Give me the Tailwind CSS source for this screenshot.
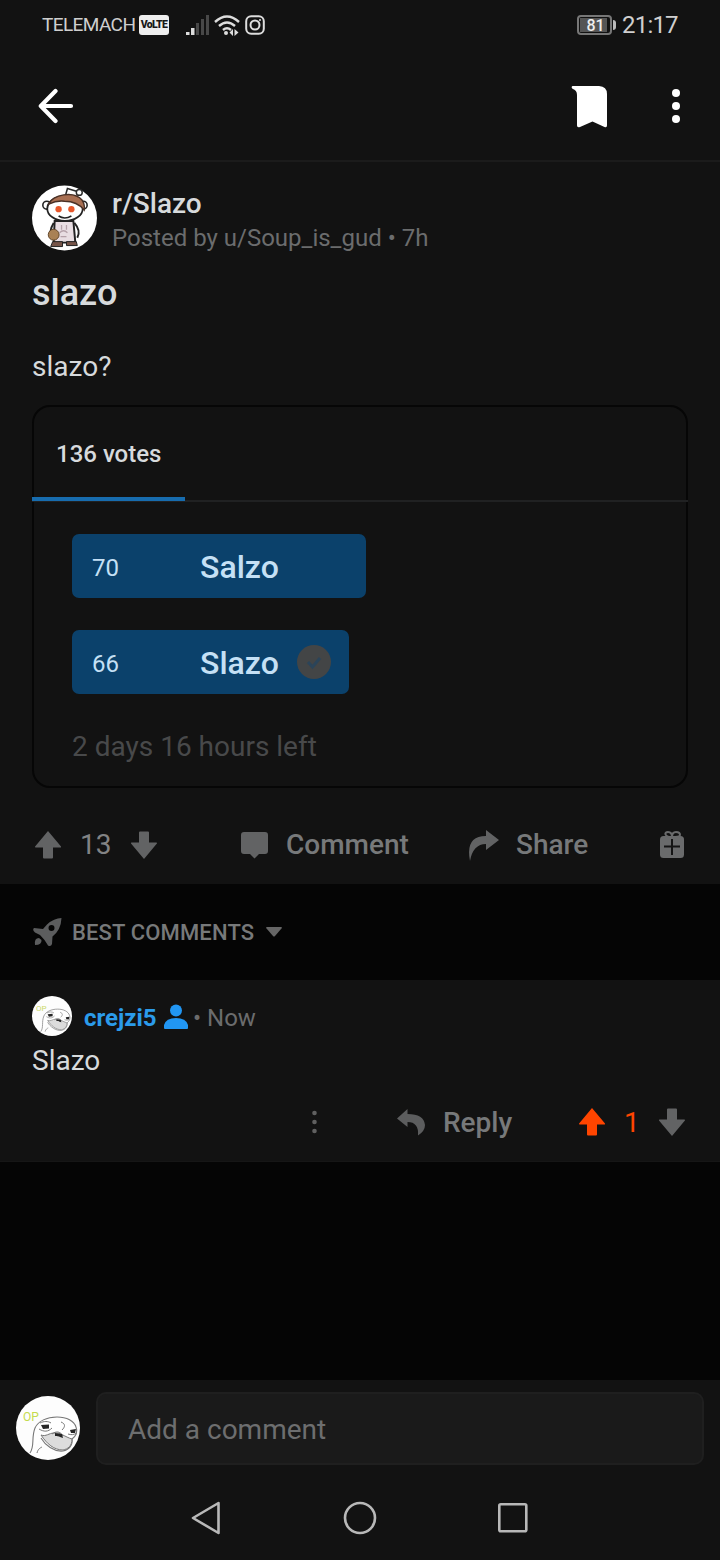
<!DOCTYPE html>
<html lang="en">
<head>
<meta charset="utf-8">
<title>r/Slazo</title>
<script src="https://cdn.jsdelivr.net/npm/@tailwindcss/browser@4"></script>
</head>
<body class="bg-[#121212]">
<svg class="hidden">
  <defs>
    <symbol id="up" viewBox="0 0 26 28"><path d="M13 0 26 15.500a.7.7 0 0 1-.6 1H18V26.500a1 1 0 0 1-1 1H9a1 1 0 0 1-1-1V16.500H.6a.7.7 0 0 1-.5-1Z" fill="currentColor"/></symbol>
    <symbol id="face" viewBox="0 0 64 64">
      <circle cx="32" cy="32" r="32" fill="#fdfdfd"/>
      <path d="M14 57C19 50 15 42 19 32c3-7 12-11 22-11 10 0 17 4 19 10 2 5 0 9-4 12 1 6-3 11-9 12-9 1-18-6-22-13" fill="#fff" stroke="#777" stroke-width="1.100"/>
      <path d="M25 39c5 2 8-2 13-2 6-1 11 4 18 6 0 7-4 10-9 11-9 0-16-6-22-15Z" fill="#dcdcdc" stroke="#777" stroke-width="1"/>
      <path d="M23 33c5 3 9 3 13-1M52 38c3 1 6 1 8-1M36 38c4-3 8-3 11 2M24 27c4-2 8-2 11 0M45 26c5 2 4 5 1 8M21 57c1-4 3-5 5-6" fill="none" stroke="#777"/>
      <path d="m25 29 8-.5v4l-6 .5ZM54 34l6-1-1 4h-4ZM39 37l7 1 1 4-3-1c-1-1-3-1-5-1Z" fill="#252525"/>
    </symbol>
  </defs>
</svg>
<main class="w-[720px] h-[1560px] flex flex-col overflow-hidden bg-[#121212] font-[Roboto,sans-serif] text-[#d7dadc] whitespace-nowrap">
  <!-- Status bar -->
  <header class="h-[50px] shrink-0 flex items-center pl-[42px] pr-[42px] text-[#cfcfcf]">
    <span class="text-[19px] leading-[50px] w-[96px] tracking-[-0.6px]">TELEMACH</span>
    <span class="w-[30px] h-[20px] ml-px rounded-[3px] bg-[#eee] text-[#181818] text-[10.5px] leading-[20px] font-black text-center tracking-[-0.6px]">VoLTE</span>
    <svg class="ml-[17px]" width="24" height="22" viewBox="0 0 24 22"><path d="M0 18h3.500v3H0zM5 14h3.500v7H5z" fill="#ddd"/><path d="M10 9h3v12h-3zM15 5h3v16h-3zM20 1h3v20h-3z" fill="#484848"/></svg>
    <svg class="ml-[4px]" width="27" height="22" viewBox="0 0 27 22"><g fill="none" stroke="#ddd" stroke-width="2.400"><path d="M1 8Q13 -3 25 8M5 12Q13 5 21 12M9 16Q13 12.500 17 16"/></g><circle cx="12" cy="19" r="2" fill="#ddd"/><path d="m15.500 18.500 3.500-3.500v7ZM24.500 18.500 20.500 15v7Z" fill="#ddd"/></svg>
    <svg class="ml-[4px]" width="20" height="20" viewBox="0 0 20 20" fill="none" stroke="#ddd" stroke-width="2"><rect x="1.200" y="1.200" width="17.600" height="17.600" rx="5"/><circle cx="10" cy="10" r="4.500"/><circle cx="15" cy="5" r="1" fill="#ddd" stroke="none"/></svg>
    <span class="ml-auto w-[35px] h-[20px] rounded-[4px] border-2 border-[#777] p-px"><span class="block w-[27px] h-[14px] bg-[#555] text-[16px] leading-[15px] font-medium text-[#eee] text-center pl-[4px]">81</span></span>
    <span class="w-[3px] h-[10px] ml-px rounded-r-sm bg-[#bbb]"></span>
    <span class="text-[24px] leading-[51px] w-[56px] ml-[6px] tracking-[-0.8px]">21:17</span>
  </header>
  <!-- App bar -->
  <nav class="h-[112px] shrink-0 flex items-center pt-[2px] pl-[38px] pr-[39px] border-b-2 border-[#1b1b1b] text-white">
    <svg width="36" height="36" viewBox="0 0 36 36" fill="none" stroke="currentColor" stroke-width="4.200" stroke-linecap="round" stroke-linejoin="round"><path d="M33 18H3M17.500 3 2.800 18l14.700 15"/></svg>
    <svg class="ml-auto mt-[2px]" width="38" height="42" viewBox="0 0 38 42" fill="currentColor"><path d="M2.500 0H29Q37 .5 37 8V39.500Q37 42 34.500 41L22.500 35.500 10 41Q7 42 7 39.500V9Q7 4 2.500 2.700Q.8 1 2.500 0Z"/></svg>
    <svg class="ml-[63px]" width="10" height="36" viewBox="0 0 10 36" fill="currentColor"><circle cx="5" cy="5" r="4"/><circle cx="5" cy="18" r="4"/><circle cx="5" cy="31" r="4"/></svg>
  </nav>
  <!-- Post -->
  <article class="h-[722px] shrink-0 px-8 flex flex-col">
    <div class="flex shrink-0 pt-[23px] h-[99px]">
      <svg width="65" height="66" viewBox="0 0 66 66">
        <circle cx="33" cy="33" r="33" fill="#fff"/>
        <path d="m34 10 2-7 10 3" fill="none" stroke="#2a2a2a" stroke-width="1.600"/><circle cx="48" cy="7" r="3" fill="#fff" stroke="#2a2a2a" stroke-width="1.500"/>
        <circle cx="15" cy="20" r="4" fill="#fff" stroke="#222" stroke-width="1.600"/><circle cx="52" cy="20" r="4" fill="#fff" stroke="#222" stroke-width="1.600"/>
        <path d="M22 38q-5 8-2 15M43 38q7 8 3 15" fill="#fff" stroke="#222" stroke-width="2"/>
        <path d="M23 36H42L44 58H22Z" fill="#e8dde2" stroke="#222" stroke-width="2"/>
        <path d="M30 40v5m5-5v5m-7 3q4-4 8 0m-7 4h6" fill="none" stroke="#b5a1a9" stroke-width="1.300"/>
        <path d="M21 57h10v5h-12ZM35 57h10l1 4H35Z" fill="#765448" stroke="#222"/>
        <ellipse cx="33.500" cy="23.500" rx="18" ry="12.500" fill="#fff" stroke="#222" stroke-width="1.800"/>
        <path d="M17 19C20 9 43 5 51 15q3 5 2 10-7-9-20-9-8-1-16 3Z" fill="#a86f52" stroke="#493026" stroke-width="1.400"/>
        <circle cx="27" cy="24" r="3.200" fill="#e8572a"/><circle cx="40" cy="24" r="3.200" fill="#e8572a"/>
        <path d="M27 31q6 4 13 0" fill="none" stroke="#222" stroke-width="1.600"/>
        <circle cx="22" cy="50" r="5.500" fill="#a98155" stroke="#63472b"/>
      </svg>
      <div class="ml-[15px] pt-[2px]">
        <div class="text-[28px] leading-[34px] font-medium">r/Slazo</div>
        <div class="text-[24px] leading-[34px] text-[#6b6c6d]">Posted by u/Soup_is_gud • 7h</div>
      </div>
    </div>
    <h1 class="text-[36px] leading-[64px] h-[64px] shrink-0 font-medium">slazo</h1>
    <p class="text-[28px] leading-[36px] mt-[24px] h-[56px] shrink-0">slazo?</p>
    <!-- Poll -->
    <section class="w-[656px] h-[383px] shrink-0 rounded-[18px] border-2 border-[#060606] flex flex-col">
      <div class="-mx-[2px] h-[95px] shrink-0 flex border-b-2 border-[#202122]">
        <div class="w-[153px] h-[94px] border-b-4 border-[#176cae] pl-[24px] text-[24px] leading-[95px] font-medium">136 votes</div>
      </div>
      <div class="pl-[38px] pt-[32px] flex flex-col gap-8 text-[#c5e0f5]">
        <div class="w-[294px] h-16 rounded-[7px] bg-[#0b416b] flex items-center pl-[20px]"><span class="w-[108px] text-[24px] pt-[4px]">70</span><span class="pt-[2px] text-[32px] font-medium">Salzo</span></div>
        <div class="w-[277px] h-16 rounded-[7px] bg-[#0b416b] flex items-center pl-[20px]"><span class="w-[108px] text-[24px] pt-[4px]">66</span><span class="w-[97px] pt-[2px] text-[32px] font-medium">Slazo</span>
          <svg width="34" height="34" viewBox="0 0 34 34"><circle cx="17" cy="17" r="17" fill="#434546"/><path d="m11 17 4.500 5L23 13" fill="none" stroke="#2b4459" stroke-width="3"/></svg>
        </div>
      </div>
      <div class="pl-[38px] mt-[35px] text-[28px] leading-[36px] text-[#48494a]">2 days 16 hours left</div>
    </section>
    <!-- Post actions -->
    <div class="h-[78px] mt-[18px] shrink-0 flex items-center text-[28px] font-medium text-[#77797a]">
      <svg class="ml-[3px] text-[#626364]" width="26" height="28"><use href="#up"/></svg>
      <span class="ml-[19px] w-[51px] font-normal text-[#828384]">13</span>
      <svg class="rotate-180 text-[#626364]" width="26" height="28"><use href="#up"/></svg>
      <svg class="ml-[84px]" width="27" height="27" viewBox="0 0 27 27"><path d="M3 0H24Q27 0 27 3V19Q27 22 24 22H18L13.500 26.500 9 22H3Q0 22 0 19V3Q0 0 3 0Z" fill="#626364"/></svg>
      <span class="ml-[18px] w-[183px]">Comment</span>
      <svg width="30" height="31" viewBox="0 0 30 31"><path d="M17 0 30 10 17 20V14Q4 14 1 31-4 6 17 6Z" fill="#626364"/></svg>
      <span class="ml-[17px] w-[144px]">Share</span>
      <svg width="24" height="28" viewBox="0 0 24 28"><rect y="5" width="24" height="22" rx="3.500" fill="#6a6b6c"/><path d="M12 6C4 6 4 1 8 1q4 0 4 5 0-5 4-5 4 0 4 3 0 2-8 2Z" fill="none" stroke="#6a6b6c" stroke-width="2"/><path d="M12 8v16M4 15.500h16" stroke="#151515" stroke-width="2"/></svg>
    </div>
  </article>
  <!-- Sort bar -->
  <div class="h-[96px] shrink-0 flex items-center px-[33px] bg-[#050505] text-[#77797a]">
    <svg class="mt-px" width="29" height="29" viewBox="0 0 29 29"><path fill-rule="evenodd" d="M28.500 0Q21 0 14 6.500L10 11 1 10Q-1 12 2 14.500L7 17 11.500 22 15 27.500Q18 29 19 26L19.500 18.500Q28 12 28.500 0ZM18.500 7a3 3 0 1 1 0 6 3 3 0 0 1 0-6Z" fill="#5c5d5e"/><path d="M6 20Q1 20 2 27 9 27 8.500 22Z" fill="#5c5d5e"/></svg>
    <span class="ml-[10px] w-[194px] pt-px text-[22px] tracking-[0.15px] font-medium">BEST COMMENTS</span>
    <svg width="16" height="10" viewBox="0 0 16 10"><path d="M1 0H15Q16.500 0 15.500 1.500L9 9Q8 10 7 9L.5 1.500Q-.5 0 1 0Z" fill="#666"/></svg>
  </div>
  <!-- Comment -->
  <article class="h-[182px] shrink-0 flex flex-col border-b border-[#161616] pt-[16px]">
    <div class="h-10 pl-8 flex items-center text-[24px]">
      <div class="relative w-10 h-10"><svg width="40" height="40"><use href="#face"/></svg><span class="absolute left-[4px] top-[7px] text-[8px] leading-[12px] text-[#cbd96a]">OP</span></div>
      <span class="ml-3 w-[80px] pt-[3px] font-bold text-[#2b9bea]">crejzi5</span>
      <svg width="24" height="25" viewBox="0 0 24 25" fill="#2196f3"><circle cx="12" cy="6.500" r="6"/><path d="M0 24V21Q2 14 12 14T24 21V24Q24 25 23 25H1Q0 25 0 24Z"/></svg>
      <span class="ml-[5px] pt-[3px] text-[#6b6c6d]">• Now</span>
    </div>
    <p class="pl-8 mt-[7px] text-[28px] leading-[36px]">Slazo</p>
    <div class="h-[64px] mt-[11px] pl-[311px] flex items-center text-[28px] font-medium text-[#77797a]">
      <svg width="6" height="24" viewBox="0 0 6 24" fill="#606060"><circle cx="3.500" cy="3" r="2.300"/><circle cx="3.500" cy="12" r="2.300"/><circle cx="3.500" cy="21" r="2.300"/></svg>
      <svg class="ml-[80px]" width="28" height="27" viewBox="0 0 28 27"><path d="M10.500 0 0 9.500 10.500 18V13Q22 13 21 26.500 28 22 28 16 27 5 10.500 5Z" fill="#5c5d5e"/></svg>
      <span class="ml-[18px] w-[136px] pt-[2px]">Reply</span>
      <svg class="text-[#ff4500]" width="26" height="28"><use href="#up"/></svg>
      <span class="ml-[19px] w-[35px] pt-[2px] font-normal text-[#ff4500]">1</span>
      <svg class="rotate-180 text-[#626364]" width="26" height="28"><use href="#up"/></svg>
    </div>
  </article>
  <div class="grow bg-[#050505]"></div>
  <!-- Comment box -->
  <footer class="h-[96px] shrink-0 flex items-center px-4">
    <div class="relative w-16 h-16"><svg width="64" height="64"><use href="#face"/></svg><span class="absolute left-[7px] top-[13px] text-[12px] leading-[16px] text-[#c4db4e]">OP</span></div>
    <div class="ml-4 w-[608px] h-[73px] rounded-[10px] border-2 border-[#1f1f1f] bg-[#1a1a1a] pl-[30px] text-[28px] leading-[71px] text-[#6d6e6f]">Add a comment</div>
  </footer>
  <!-- System navigation -->
  <div class="h-[84px] shrink-0 flex items-center pl-[191px] text-[#b8b8b8]">
    <svg width="30" height="34" viewBox="0 0 30 34" fill="none" stroke="currentColor" stroke-width="2.600" stroke-linejoin="round"><path d="M27.500 2V32L2 17Z"/></svg>
    <svg class="ml-[122px]" width="34" height="34" viewBox="0 0 34 34" fill="none" stroke="currentColor" stroke-width="2.600"><circle cx="17" cy="17" r="15"/></svg>
    <svg class="ml-[121px]" width="30" height="30" viewBox="0 0 30 30" fill="none" stroke="currentColor" stroke-width="2.600"><rect x="1.300" y="1.300" width="27" height="27" rx="1.500"/></svg>
  </div>
</main>
</body>
</html>
